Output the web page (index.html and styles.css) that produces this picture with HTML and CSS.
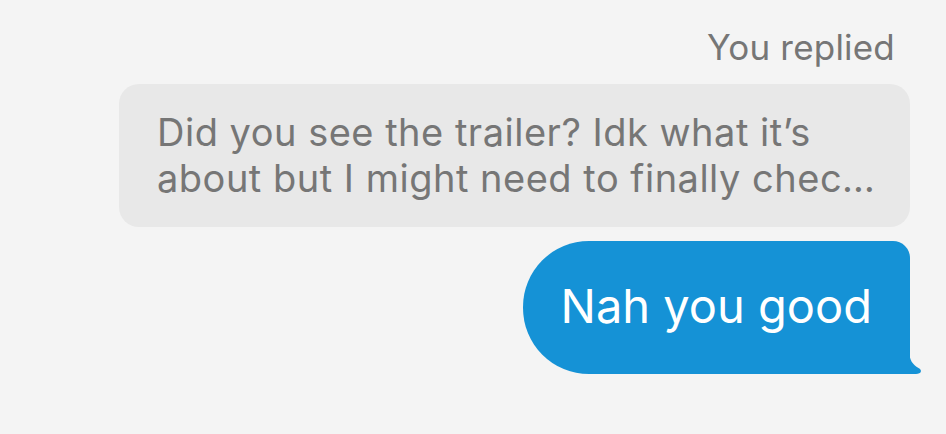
FILE: index.html
```html
<!DOCTYPE html>
<html lang="en">
<head>
    <meta charset="UTF-8">
    <meta name="viewport" content="width=device-width, initial-scale=1.0">
    <title>Reply</title>
    <link rel="stylesheet" href="styles.css">
</head>
<body>
    <div class="thread">
        <div class="reply-label">You replied</div>

        <div class="bubble quoted">
            Did you see the trailer? Idk what it’s<br>
            about but I might need to finally chec…
        </div>

        <div class="bubble mine">
            Nah you good
            <svg class="tail" width="14" height="24" viewBox="0 0 14 24">
                <path d="M0 0 C0 10 4 15 9.5 18 C13.5 20 12.5 24 7 24 L0 24 Z" fill="#1592d6"/>
            </svg>
        </div>
    </div>
</body>
</html>
```

FILE: styles.css
```css
/* базовые стили */
:root {
    --bg: #f4f4f4;
    --grey-bubble: #e8e8e8;
    --grey-text: #767676;
    --blue: #1592d6;
}

body {
    margin: 0;
    background: var(--bg);
    font-family: Inter, "Liberation Sans", sans-serif;
}

.thread {
    display: flex;
    flex-direction: column;
    align-items: flex-end;
    padding: 26px 36px 0 0;
}

.reply-label {
    font-size: 35px;
    color: var(--grey-text);
    margin-right: 15px;
    line-height: 42px;
    letter-spacing: 0.2px;
}

.bubble {
    position: relative;
}

.quoted {
    margin-top: 16px;
    width: 791px;
    box-sizing: border-box;
    padding: 25px 38px 26px;
    background: var(--grey-bubble);
    color: var(--grey-text);
    border-radius: 20px;
    font-size: 38px;
    line-height: 46px;
    letter-spacing: 0.5px;
    white-space: nowrap;
}

.mine {
    margin-top: 14px;
    height: 133px;
    box-sizing: border-box;
    padding: 0 38px 5px;
    display: flex;
    align-items: center;
    background: var(--blue);
    color: white;
    border-radius: 66px 17px 0 66px;
    font-size: 47px;
}

.tail {
    position: absolute;
    right: -13px;
    bottom: 0;
}
```
